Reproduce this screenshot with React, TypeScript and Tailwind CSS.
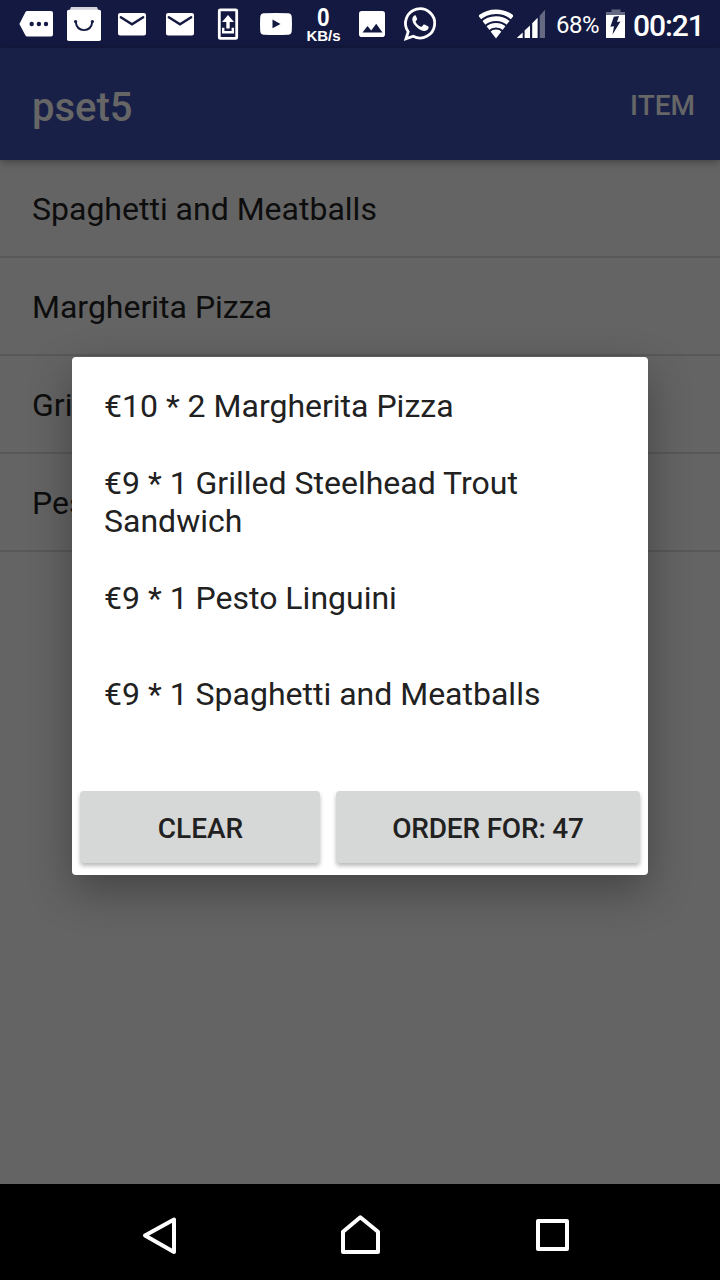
import type { ReactNode } from "react";

const DISHES = [
  "Spaghetti and Meatballs",
  "Margherita Pizza",
  "Grilled Steelhead Trout Sandwich",
  "Pesto Linguini",
];

const ORDER = [
  "€10 * 2 Margherita Pizza",
  "€9 * 1 Grilled Steelhead Trout Sandwich",
  "€9 * 1 Pesto Linguini",
  "€9 * 1 Spaghetti and Meatballs",
];

function Cell({ children }: { children: ReactNode }) {
  return (
    <svg className="size-12 shrink-0" viewBox="0 0 48 48" fill="white">
      {children}
    </svg>
  );
}

function Mail() {
  return (
    <Cell>
      <rect x="10" y="13" width="28" height="22.5" rx="2" />
      <path d="M12.8 17.2 24 24.3l11.2-7.1" fill="none" stroke="#131940" strokeWidth="2.4" strokeLinecap="round" />
    </Cell>
  );
}

function StatusBar() {
  return (
    <header className="flex h-12 items-center bg-[#131940] pl-3 text-white">
      <Cell>
        <path d="M15.2 11H39a2 2 0 0 1 2 2v21.5a2 2 0 0 1-2 2H15.2a2 2 0 0 1-1.7-1L7.4 24l6.1-12a2 2 0 0 1 1.7-1Z" />
        <g fill="#131940">
          <circle cx="19.7" cy="24" r="2.2" />
          <circle cx="26.9" cy="24" r="2.2" />
          <circle cx="34" cy="24" r="2.2" />
        </g>
      </Cell>
      <Cell>
        <path d="M11 7h26l1.6 4H9.4Z" fill="#d0d1d9" />
        <rect x="7" y="9.8" width="34" height="31.2" rx="1.8" />
        <path d="M15.6 21.5c.8 5.8 4 8.6 8.4 8.6s7.6-2.8 8.4-8.6" fill="none" stroke="#131940" strokeWidth="1.9" />
        <circle cx="15.6" cy="21.5" r="1.6" fill="#131940" />
        <circle cx="32.4" cy="21.5" r="1.6" fill="#131940" />
      </Cell>
      <Mail />
      <Mail />
      <Cell>
        <rect x="15.3" y="9.8" width="17.4" height="28.6" rx="1" fill="none" stroke="white" strokeWidth="2.8" />
        <path d="M24 15l6 7h-4.3v6.5h-3.4V22H18Z" />
        <path d="M19.2 27.8v4.5h9.6v-4.5" fill="none" stroke="white" strokeWidth="2.4" />
      </Cell>
      <Cell>
        <path d="M12 13.3q12-.8 24 0 3.6.2 3.8 4 .4 6.7 0 13.4-.2 3.8-3.8 4-12 .8-24 0-3.6-.2-3.8-4-.4-6.7 0-13.4.2-3.8 3.8-4Z" />
        <path d="M20.5 19.5v8.8l8-4.4Z" fill="#131940" />
      </Cell>
      <div className="flex w-12 flex-col items-center font-['Liberation_Sans',sans-serif] font-bold">
        <span className="-ml-px scale-x-[0.87] text-[26px] leading-[24px]">0</span>
        <span className="-ml-px text-[15px] leading-[14px]">KB/s</span>
      </div>
      <Cell>
        <rect x="11" y="11" width="26" height="26" rx="2.8" />
        <path d="M14.5 32.5l5-6.5 3.7 4.4 5-6.6 6.3 8.7Z" fill="#131940" />
      </Cell>
      <Cell>
        <path d="M12.2 31.8A14.6 14.6 0 1 1 17.2 36.2L10 38.7Z" fill="none" stroke="white" strokeWidth="2.8" />
        <path d="M19.3 15.2c-1.3 0-3 1.7-3 4.2 0 3 2.5 6 4.7 8 2.6 2.3 5.4 3.7 7.7 3.5 2.3-.2 4-1.9 4-3.7 0-.5-.3-.8-.8-1l-3.4-1.6c-.5-.2-.9-.1-1.3.4l-1.2 1.5c-.3.4-.7.4-1.2.2-2.1-1-3.9-2.5-5-4.5-.3-.5-.2-.8.1-1.2l1-1.2c.3-.4.3-.7.1-1.2l-1.3-3c-.2-.4-.3-.4-.4-.4Z" />
      </Cell>
      <svg className="ml-[35px] h-12 w-[34px] shrink-0" viewBox="0 0 34 48">
        <clipPath id="wifi-fan">
          <path d="M17 38.5-1.5 14.5V0h37v14.5Z" />
        </clipPath>
        <g clipPath="url(#wifi-fan)" fill="none" stroke="white" strokeWidth="4.6">
          <circle cx="17" cy="38" r="26.2" />
          <circle cx="17" cy="38" r="19.4" />
          <circle cx="17" cy="38" r="12.8" />
          <circle cx="17" cy="38" r="4.2" strokeWidth="8.4" />
        </g>
      </svg>
      <svg className="ml-1 h-12 w-[29px] shrink-0" viewBox="0 0 29 48" fill="white">
        <path d="M.2 38v-.5l5.500-5V38Z" />
        <path d="M7.600 38v-7.500l5.400-5V38Z" />
        <path d="M15.200 38V23.300l5.400-5.500V38Z" />
        <path d="M22.700 38V15.800l5.300-6V38Z" opacity=".35" />
      </svg>
      <span className="ml-[10px] w-[50px] pt-px text-[24px] tracking-[-0.5px]">68%</span>
      <svg className="h-12 w-5 shrink-0" viewBox="0 0 20 48">
        <path d="M5.5 9.5h9V12H19v3H0v-3h5.500Z" fill="white" opacity=".35" />
        <path d="M0 15h19v23H0Z" fill="white" />
        <path d="M7.800 16.700 13 16l-2 6 3.500-.4L6.500 34.500l1.500-8.300-3.600.5Z" fill="#131940" />
      </svg>
      <span className="ml-[7px] pt-0.5 text-[30px] font-medium tracking-[-1.1px]">00:21</span>
    </header>
  );
}

function AppBar() {
  return (
    <div className="relative flex h-28 items-center justify-between bg-[#192048] pt-1 pr-[25px] pl-8 font-medium text-[#666] shadow-[0_2px_8px_rgba(0,0,0,0.35)]">
      <h1 className="pt-[3px] text-[40px] font-medium">pset5</h1>
      <button className="text-[28px]">ITEM</button>
    </div>
  );
}

function OrderDialog() {
  return (
    <section
      role="dialog"
      className="absolute top-[357px] left-[72px] h-[518px] w-[576px] rounded-[4px] bg-white text-[#212121] shadow-[0_16px_44px_rgba(0,0,0,0.32)]"
    >
      <ul>
        {ORDER.map((line) => (
          <li key={line} className="flex h-24 items-center px-8 pt-0.5 text-[32px] leading-[38px]">
            {line}
          </li>
        ))}
      </ul>
      <div className="mt-[50px] flex gap-4 px-2 text-[28px] font-medium">
        <button className="h-[72px] w-60 rounded-[4px] bg-[#d6d7d7] pt-1 pl-px shadow-[0_3px_4px_rgba(0,0,0,0.27)]">CLEAR</button>
        <button className="h-[72px] grow rounded-[4px] bg-[#d6d7d7] pt-1 tracking-[-0.2px] shadow-[0_3px_4px_rgba(0,0,0,0.27)]">ORDER FOR: 47</button>
      </div>
    </section>
  );
}

const NAV_ICONS = [
  "M54 35.500v32.500L25 51.500Z",
  "M31 68V47.800L48.300 33.300 66 47.800V68Z",
  "M34 37h29v32H34Z",
];

function NavBar() {
  return (
    <nav className="flex h-24 items-center justify-center gap-24 bg-black">
      {NAV_ICONS.map((d, i) => (
        <button key={d} className="size-24">
          <svg className="size-24" viewBox="0 0 96 96" fill="none" stroke="white" strokeWidth="4" strokeLinejoin="round">
            {i === 2 ? <rect x="34" y="37" width="29" height="28" /> : <path d={d} />}
          </svg>
        </button>
      ))}
    </nav>
  );
}

export default function App() {
  return (
    <div className="relative flex h-[1280px] w-[720px] flex-col overflow-hidden bg-[#646464] font-[Roboto,sans-serif]">
      <StatusBar />
      <AppBar />
      <ul className="grow text-[32px] text-[#0d0d0d]">
        {DISHES.map((dish) => (
          <li key={dish} className="flex h-[98px] items-center border-b-2 border-[#585858] px-8 pt-0.5">
            {dish}
          </li>
        ))}
      </ul>
      <NavBar />
      <OrderDialog />
    </div>
  );
}
